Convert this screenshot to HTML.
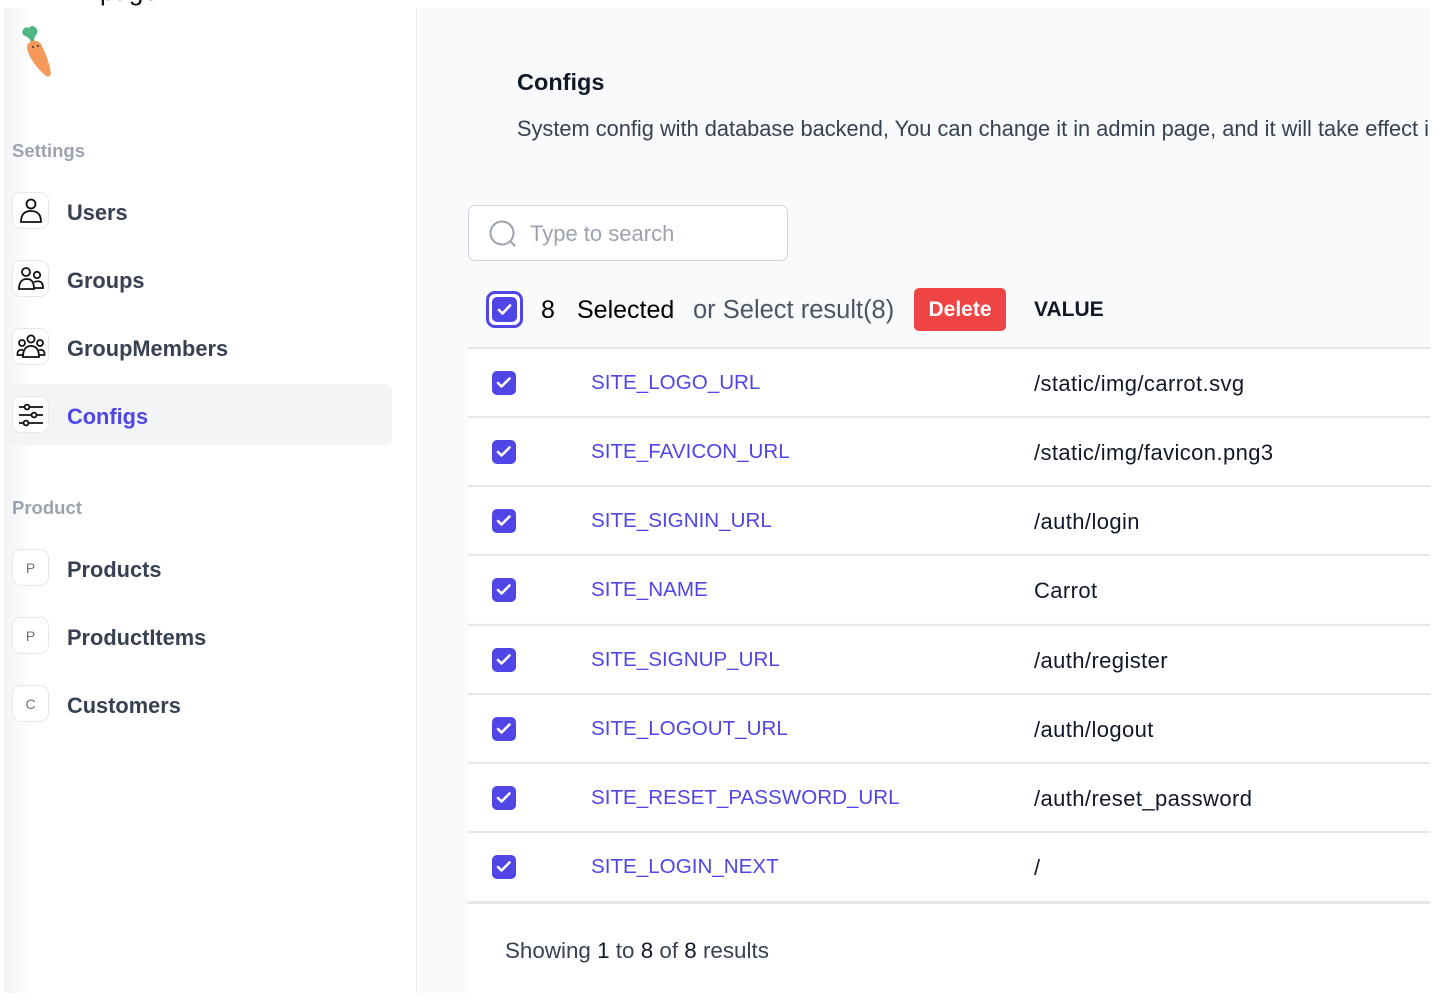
<!DOCTYPE html>
<html><head><meta charset="utf-8"><style>
*{box-sizing:border-box;margin:0;padding:0}
body{width:1441px;height:1003px;position:relative;overflow:hidden;background:#fff;font-family:"Liberation Sans",sans-serif;color:#111827}
.abs{position:absolute}
#side{left:4px;top:8px;width:413px;height:985px;background:linear-gradient(90deg,#f3f4f6 0px,#fff 30px);border-right:1px solid #e5e7eb}
#main{left:418px;top:8px;width:1012px;height:985px;background:#f9fafb}
.sec{font-size:18.5px;font-weight:bold;color:#9ca3af;left:12px}
.nav{left:4px;width:388px;height:61px}
.nav .ic{position:absolute;left:8px;top:12px;width:37px;height:37px;border:1px solid #e5e7eb;border-radius:9px;background:#fff;display:flex;align-items:center;justify-content:center;font-size:14px;color:#6b7280}
.nav .t{position:absolute;left:63px;top:20px;font-size:21.8px;font-weight:bold;color:#374151}
.row{left:468px;width:962px;height:69px;background:#fff;border-top:2px solid #e5e7eb}
.cb{position:absolute;left:24px;top:22px;width:24px;height:24px;border-radius:5px;background:#4f46e5}
.cb svg{position:absolute;left:4px;top:5px}
.k{position:absolute;left:123px;top:22px;font-size:20.6px;color:#4f46e5}
.v{position:absolute;left:566px;top:22px;font-size:22px;letter-spacing:0.4px;color:#111827}
</style></head><body>
<div class="abs" style="left:100px;top:-24px;font-size:26px;color:#111">page</div>
<div id="side" class="abs"></div>
<div id="main" class="abs"></div>

<svg class="abs" style="left:20px;top:25px" width="36" height="54" viewBox="0 0 36 54">
<path d="M11 17 Q9 12 5 11 Q1 9 3 5 Q5 1 9 3 Q12 -1 16 3 Q19 6 16 10 Q14 12 14 17Z" fill="#4cb782"/>
<path d="M8 19 Q14 12 21 19 Q29 35 31 48 Q30 53 26 51 Q13 40 8 27 Q6 22 8 19Z" fill="#f4995a"/>
<circle cx="13" cy="22" r="1" fill="#333"/><circle cx="18" cy="21" r="1" fill="#333"/>
</svg>

<div class="abs sec" style="top:140px">Settings</div>
<div class="abs nav" style="top:180px"><div class="ic"><svg width="26" height="28" viewBox="0 0 26 28" fill="none" stroke="#111" stroke-width="1.8"><circle cx="13" cy="7" r="4.5"/><path d="M3 25 Q3 14 13 14 Q23 14 23 25 Z"/></svg></div><div class="t">Users</div></div>
<div class="abs nav" style="top:248px"><div class="ic"><svg width="28" height="26" viewBox="0 0 28 26" fill="none" stroke="#111" stroke-width="1.8"><circle cx="9" cy="6" r="4"/><circle cx="20" cy="9" r="3.2"/><path d="M2 23 Q2 13 10 13 Q17 13 17 23Z"/><path d="M17 16 Q26 13 26 22 L17 22"/></svg></div><div class="t">Groups</div></div>
<div class="abs nav" style="top:316px"><div class="ic"><svg width="30" height="26" viewBox="0 0 30 26" fill="none" stroke="#111" stroke-width="1.8"><circle cx="15" cy="5" r="3.6"/><circle cx="6" cy="9" r="3"/><circle cx="24" cy="9" r="3"/><path d="M7 23 Q7 12 15 12 Q23 12 23 23Z"/><path d="M7 16 Q1 15 1.5 21 L7 21 M23 16 Q29 15 28.5 21 L23 21"/></svg></div><div class="t">GroupMembers</div></div>
<div class="abs nav" style="top:384px;background:#f3f4f6;border-radius:8px"><div class="ic"><svg width="28" height="24" viewBox="0 0 28 24" fill="none" stroke="#111" stroke-width="1.8"><path d="M2 4h24M2 12h24M2 20h24"/><circle cx="10" cy="4" r="2.4" fill="#fff"/><circle cx="17" cy="12" r="2.4" fill="#fff"/><circle cx="9" cy="20" r="2.4" fill="#fff"/></svg></div><div class="t" style="color:#4f46e5">Configs</div></div>

<div class="abs sec" style="top:497px">Product</div>
<div class="abs nav" style="top:537px"><div class="ic">P</div><div class="t">Products</div></div>
<div class="abs nav" style="top:605px"><div class="ic">P</div><div class="t">ProductItems</div></div>
<div class="abs nav" style="top:673px"><div class="ic">C</div><div class="t">Customers</div></div>

<div class="abs" style="left:517px;top:69px;font-size:23.5px;font-weight:bold;color:#111827">Configs</div>
<div class="abs" style="left:517px;top:116px;font-size:21.8px;color:#374151;white-space:nowrap;width:913px;overflow:hidden">System config with database backend, You can change it in admin page, and it will take effect immediately</div>

<div class="abs" style="left:468px;top:205px;width:320px;height:56px;background:#fff;border:1px solid #d1d5db;border-radius:7px"></div>
<svg class="abs" style="left:488px;top:219px" width="30" height="30" viewBox="0 0 30 30" fill="none" stroke="#9ca3af" stroke-width="2"><circle cx="14" cy="14" r="11.5"/><path d="M22 22l5 5"/></svg>
<div class="abs" style="left:530px;top:221px;font-size:22px;color:#9ca3af">Type to search</div>

<div class="abs" style="left:486px;top:291px;width:37px;height:37px;border:3px solid #4f46e5;border-radius:9px;background:#fff"></div>
<div class="abs" style="left:492px;top:297px;width:25px;height:25px;border-radius:5px;background:#4f46e5"><svg style="position:absolute;left:5px;top:6px" width="15" height="13" viewBox="0 0 15 13"><path d="M2 7l3.5 3.5L13 2.5" stroke="#fff" stroke-width="2.6" fill="none" stroke-linecap="round" stroke-linejoin="round"/></svg></div>
<div class="abs" style="left:541px;top:296px;font-size:25px;color:#000">8</div>
<div class="abs" style="left:577px;top:296px;font-size:25px;color:#000">Selected</div>
<div class="abs" style="left:693px;top:296px;font-size:25.5px;color:#4b5563">or Select result(8)</div>
<div class="abs" style="left:914px;top:288px;width:92px;height:43px;background:#ef4444;border-radius:5px;color:#fff;font-size:21px;font-weight:bold;text-align:center;line-height:43px">Delete</div>
<div class="abs" style="left:1034px;top:298px;font-size:21px;font-weight:bold;color:#111827">VALUE</div>

<div class="abs row" style="top:347px"><div class="cb"><svg width="16" height="14" viewBox="0 0 16 14"><path d="M2 7l3.5 3.5L13.5 2.5" stroke="#fff" stroke-width="2.6" fill="none" stroke-linecap="round" stroke-linejoin="round"/></svg></div><div class="k">SITE_LOGO_URL</div><div class="v">/static/img/carrot.svg</div></div>
<div class="abs row" style="top:416px"><div class="cb"><svg width="16" height="14" viewBox="0 0 16 14"><path d="M2 7l3.5 3.5L13.5 2.5" stroke="#fff" stroke-width="2.6" fill="none" stroke-linecap="round" stroke-linejoin="round"/></svg></div><div class="k">SITE_FAVICON_URL</div><div class="v">/static/img/favicon.png3</div></div>
<div class="abs row" style="top:485px"><div class="cb"><svg width="16" height="14" viewBox="0 0 16 14"><path d="M2 7l3.5 3.5L13.5 2.5" stroke="#fff" stroke-width="2.6" fill="none" stroke-linecap="round" stroke-linejoin="round"/></svg></div><div class="k">SITE_SIGNIN_URL</div><div class="v">/auth/login</div></div>
<div class="abs row" style="top:554px"><div class="cb"><svg width="16" height="14" viewBox="0 0 16 14"><path d="M2 7l3.5 3.5L13.5 2.5" stroke="#fff" stroke-width="2.6" fill="none" stroke-linecap="round" stroke-linejoin="round"/></svg></div><div class="k">SITE_NAME</div><div class="v">Carrot</div></div>
<div class="abs row" style="top:624px"><div class="cb"><svg width="16" height="14" viewBox="0 0 16 14"><path d="M2 7l3.5 3.5L13.5 2.5" stroke="#fff" stroke-width="2.6" fill="none" stroke-linecap="round" stroke-linejoin="round"/></svg></div><div class="k">SITE_SIGNUP_URL</div><div class="v">/auth/register</div></div>
<div class="abs row" style="top:693px"><div class="cb"><svg width="16" height="14" viewBox="0 0 16 14"><path d="M2 7l3.5 3.5L13.5 2.5" stroke="#fff" stroke-width="2.6" fill="none" stroke-linecap="round" stroke-linejoin="round"/></svg></div><div class="k">SITE_LOGOUT_URL</div><div class="v">/auth/logout</div></div>
<div class="abs row" style="top:762px"><div class="cb"><svg width="16" height="14" viewBox="0 0 16 14"><path d="M2 7l3.5 3.5L13.5 2.5" stroke="#fff" stroke-width="2.6" fill="none" stroke-linecap="round" stroke-linejoin="round"/></svg></div><div class="k">SITE_RESET_PASSWORD_URL</div><div class="v">/auth/reset_password</div></div>
<div class="abs row" style="top:831px;height:71px"><div class="cb"><svg width="16" height="14" viewBox="0 0 16 14"><path d="M2 7l3.5 3.5L13.5 2.5" stroke="#fff" stroke-width="2.6" fill="none" stroke-linecap="round" stroke-linejoin="round"/></svg></div><div class="k">SITE_LOGIN_NEXT</div><div class="v">/</div></div>
<div class="abs" style="left:468px;top:901px;width:962px;height:92px;background:#fff;border-top:3px solid #e5e7eb"></div>
<div class="abs" style="left:505px;top:938px;font-size:22.4px;color:#374151">Showing <span style="color:#111827">1</span> to <span style="color:#111827">8</span> of <span style="color:#111827">8</span> results</div>
</body></html>
